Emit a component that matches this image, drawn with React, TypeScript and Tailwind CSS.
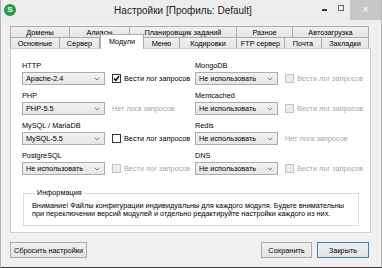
import { ChevronDown } from "lucide-react";

const rowOne = [
  { label: "Домены", w: 60 },
  { label: "Алиасы", w: 60 },
  { label: "Планировщик заданий", w: 107 },
  { label: "Разное", w: 56 },
  { label: "Автозагрузка", w: 76 },
];

const rowTwo = [
  { label: "Основные", w: 50 },
  { label: "Сервер", w: 40 },
  { label: "Модули", w: 44, active: true },
  { label: "Меню", w: 36 },
  { label: "Кодировки", w: 57 },
  { label: "FTP сервер", w: 48 },
  { label: "Почта", w: 37 },
  { label: "Закладки", w: 47 },
];

type LogState = "checked" | "unchecked" | "disabled" | "none";

const left: { title: string; value: string; log: LogState }[] = [
  { title: "HTTP", value: "Apache-2.4", log: "checked" },
  { title: "PHP", value: "PHP-5.5", log: "none" },
  { title: "MySQL / MariaDB", value: "MySQL-5.5", log: "unchecked" },
  { title: "PostgreSQL", value: "Не использовать", log: "disabled" },
];

const right: { title: string; value: string; log: LogState }[] = [
  { title: "MongoDB", value: "Не использовать", log: "disabled" },
  { title: "Memcached", value: "Не использовать", log: "disabled" },
  { title: "Redis", value: "Не использовать", log: "none" },
  { title: "DNS", value: "Не использовать", log: "disabled" },
];

function Tab({ label, w, first, active }: { label: string; w: number; first?: boolean; active?: boolean }) {
  if (active) {
    return (
      <div
        style={{ width: w }}
        className="relative z-10 -mt-[3px] flex h-[15px] items-start justify-center whitespace-nowrap border border-b-0 border-[#acacac] bg-white pt-[2px] text-[7.3px] leading-[9px] text-black"
      >
        {label}
      </div>
    );
  }
  return (
    <div
      style={{ width: w }}
      className={`flex h-[11px] items-center justify-center whitespace-nowrap border-t border-r border-[#acacac] bg-gradient-to-b from-[#f0f0f0] to-[#e5e5e5] text-[7.3px] leading-[9px] text-black ${first ? "border-l" : ""}`}
    >
      {label}
    </div>
  );
}

function Log({ state }: { state: LogState }) {
  if (state === "none") {
    return <span className="whitespace-nowrap text-[7.3px] leading-[9px] text-[#a6a6a6]">Нет лога запросов</span>;
  }
  const disabled = state === "disabled";
  return (
    <div className="flex items-center gap-[3px] whitespace-nowrap">
      <div
        className={`flex h-[9px] w-[9px] items-center justify-center border ${
          disabled ? "border-[#c4c4c4] bg-[#ececec]" : "border-[#333333] bg-white"
        }`}
      >
        {state === "checked" && (
          <svg width="7" height="7" viewBox="0 0 7 7">
            <path d="M1 3.5 L2.8 5.5 L6 1" stroke="#000" strokeWidth="1.4" fill="none" />
          </svg>
        )}
      </div>
      <span className={`text-[7.3px] leading-[9px] ${disabled ? "text-[#a6a6a6]" : "text-black"}`}>
        Вести лог запросов
      </span>
    </div>
  );
}

function Module({ title, value, log }: { title: string; value: string; log: LogState }) {
  return (
    <div className="flex h-[30px] flex-col">
      <span className="whitespace-nowrap text-[7.3px] leading-[9px] text-black">{title}</span>
      <div className="mt-[2px] flex items-center gap-[7px]">
        <div className="flex h-[13px] w-[83px] items-center justify-between border border-[#acacac] bg-gradient-to-b from-[#f2f2f2] to-[#e6e6e6] pl-[3px] pr-[3px]">
          <span className="whitespace-nowrap text-[7.3px] leading-[9px] text-black">{value}</span>
          <ChevronDown size={8} strokeWidth={2} className="text-[#444]" />
        </div>
        <Log state={log} />
      </div>
    </div>
  );
}

function Button({ label, w, primary }: { label: string; w: number; primary?: boolean }) {
  return (
    <button
      style={{ width: w }}
      className={`flex h-[16px] items-center justify-center whitespace-nowrap border bg-gradient-to-b from-[#f0f0f0] to-[#e3e3e3] text-[7.3px] leading-[9px] text-black ${
        primary ? "border-[#3c7fb1]" : "border-[#acacac]"
      }`}
    >
      {label}
    </button>
  );
}

export default function App() {
  return (
    <div className="flex h-[268px] w-[382px] flex-col border-x border-b border-x-[#b4b4b4] border-b-[#3a3a3a] bg-[#f0f0f0] font-['Liberation_Sans',Arial,sans-serif]">
      <div className="flex h-[22px] items-start bg-[#ededed]">
        <div className="ml-[3px] mt-[4px] flex h-[12px] w-[12px] items-center justify-center rounded-full bg-[#1f9d4a] text-[8px] font-bold leading-none text-white">
          S
        </div>
        <div className="flex-1 pl-[28px] pt-[4px] text-center text-[10px] leading-[13px] text-[#222]">
          Настройки [Профиль: Default]
        </div>
        <div className="flex h-[20px] items-start">
          <span className="mt-[9px] h-[1.5px] w-[5px] bg-[#333]" />
          <span className="ml-[11px] mt-[5px] h-[6px] w-[6px] border border-[#666]" />
          <div className="ml-[6px] flex h-[20px] w-[31px] items-center justify-center bg-[#c7c7c7] text-[10px] leading-none text-white">
            ×
          </div>
        </div>
      </div>

      <div className="ml-[9px] mt-[4px] flex flex-col">
        <div className="flex">
          {rowOne.map((t, i) => (
            <Tab key={t.label} label={t.label} w={t.w} first={i === 0} />
          ))}
        </div>
        <div className="flex h-[11px] items-start">
          {rowTwo.map((t, i) => (
            <Tab key={t.label} label={t.label} w={t.w} first={i === 0} active={t.active} />
          ))}
        </div>
      </div>

      <div className="ml-[9px] flex h-[185px] w-[361px] flex-col border border-[#cfcfcf] bg-white pl-[11px] pt-[12px]">
        <div className="grid grid-cols-[173px_1fr]">
          <div className="flex flex-col">
            {left.map((m) => (
              <Module key={m.title} {...m} />
            ))}
          </div>
          <div className="flex flex-col">
            {right.map((m) => (
              <Module key={m.title} {...m} />
            ))}
          </div>
        </div>
        <fieldset className="ml-[1px] mt-[8px] w-[336px] border border-[#dcdcdc] pb-[7px] pl-[8px] pt-[5px]">
          <legend className="ml-[3px] px-[2px] text-[7.3px] leading-[8px] text-black">Информация</legend>
          <p className="whitespace-nowrap text-[7.3px] leading-[8px] text-black">
            Внимание! Файлы конфигурации индивидуальны для каждого модуля. Будьте внимательны
            <br />
            при переключении версий модулей и отдельно редактируйте настройки каждого из них.
          </p>
        </fieldset>
      </div>

      <div className="mt-[9px] flex items-center pl-[9px] pr-[12px]">
        <Button label="Сбросить настройки" w={77} />
        <div className="ml-auto flex gap-[5px]">
          <Button label="Сохранить" w={51} />
          <Button label="Закрыть" w={52} primary />
        </div>
      </div>
    </div>
  );
}
